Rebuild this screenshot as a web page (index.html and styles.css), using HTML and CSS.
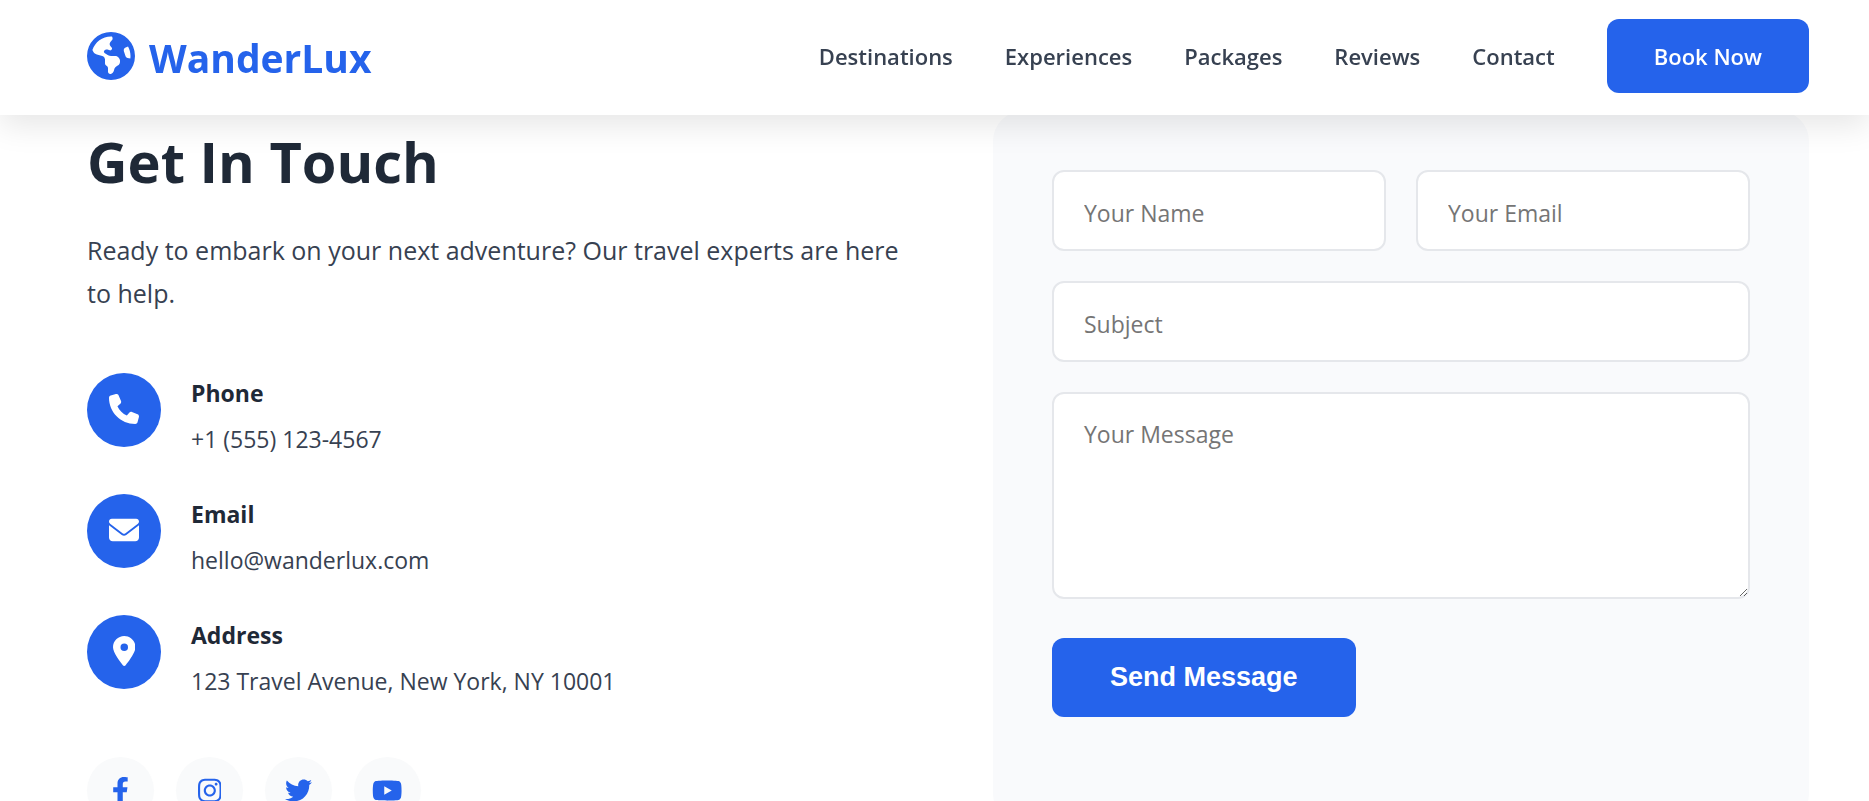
FILE: index.html
```
<!DOCTYPE html>
<html lang="en">
<head>
    <meta charset="UTF-8">
    <meta name="viewport" content="width=device-width, initial-scale=1.0">
    <title>WanderLux - Contact</title>
    <link rel="stylesheet" href="styles.css">
</head>

<body>
    <header class="header">
        <a href="#" class="logo">
            <svg viewBox="0 0 512 512" aria-hidden="true"><path d="M57.7 193l9.4 16.4c8.3 14.5 21.9 25.2 38 29.8L163 255.7c17.2 4.9 29 20.6 29 38.5v39.9c0 11 6.2 21 16 25.9s16 14.9 16 25.9v39c0 15.6 14.9 26.9 29.9 22.6c16.1-4.6 28.6-17.5 32.7-33.8l2.8-11.2c4.2-16.9 15.2-31.4 30.3-40l8.1-4.6c15-8.5 24.2-24.5 24.2-41.7v-8.3c0-12.7-5.1-24.9-14.1-33.9l-3.9-3.9c-9-9-21.2-14.1-33.9-14.1H257c-11.1 0-22.1-2.9-31.8-8.4l-34.5-19.7c-4.3-2.5-7.6-6.5-9.2-11.2c-3.2-9.6 1.1-20 10.2-24.5l5.9-3c6.6-3.3 14.3-3.9 21.3-1.5l23.2 7.7c8.2 2.7 17.2-.4 21.9-7.5c4.7-7 4.2-16.3-1.2-22.8l-13.6-16.3c-10-12-9.9-29.5 .3-41.3l15.7-18.3c8.8-10.3 10.2-25 3.5-36.7l-2.4-4.2c-3.5-.2-6.9-.3-10.4-.3C163.1 48 84.4 108.9 57.7 193zM464 256c0-36.8-9.6-71.4-26.4-101.5L412 164.8c-15.7 6.3-23.8 23.8-18.5 39.8l16.9 50.7c3.5 10.4 12 18.3 22.6 20.9l29.1 7.3c1.2-9 1.8-18.2 1.8-27.5zM0 256a256 256 0 1 1 512 0A256 256 0 1 1 0 256z"/></svg>
            <span>WanderLux</span>
        </a>
        <nav class="nav">
            <a href="#destinations">Destinations</a>
            <a href="#experiences">Experiences</a>
            <a href="#packages">Packages</a>
            <a href="#reviews">Reviews</a>
            <a href="#contact">Contact</a>
            <a href="#book" class="book-btn">Book Now</a>
        </nav>
    </header>

    <main class="contact" id="contact">
        <section class="contact-info">
            <h2>Get In Touch</h2>
            <p class="intro">Ready to embark on your next adventure? Our travel experts are here to help.</p>

            <div class="contact-list">
                <div class="contact-item">
                    <div class="contact-icon">
                        <svg viewBox="0 0 512 512" aria-hidden="true"><path d="M164.9 24.6c-7.7-18.6-28-28.5-47.4-23.2l-88 24C12.1 30.2 0 46 0 64C0 311.4 200.6 512 448 512c18 0 33.8-12.1 38.6-29.5l24-88c5.3-19.4-4.6-39.7-23.2-47.4l-96-40c-16.3-6.8-35.2-2.1-46.3 11.6L304.7 368C234.3 334.7 177.3 277.7 144 207.3L193.3 167c13.7-11.2 18.4-30 11.6-46.3l-40-96z"/></svg>
                    </div>
                    <div>
                        <h4>Phone</h4>
                        <p>+1 (555) 123-4567</p>
                    </div>
                </div>
                <div class="contact-item">
                    <div class="contact-icon">
                        <svg viewBox="0 0 512 512" aria-hidden="true"><path d="M48 64C21.5 64 0 85.5 0 112c0 15.1 7.1 29.3 19.2 38.4L236.8 313.6c11.4 8.5 27 8.5 38.4 0L492.8 150.4c12.1-9.1 19.2-23.3 19.2-38.4c0-26.5-21.5-48-48-48H48zM0 176V384c0 35.3 28.7 64 64 64H448c35.3 0 64-28.7 64-64V176L294.4 339.2c-22.8 17.1-54 17.1-76.8 0L0 176z"/></svg>
                    </div>
                    <div>
                        <h4>Email</h4>
                        <p>hello@wanderlux.com</p>
                    </div>
                </div>
                <div class="contact-item">
                    <div class="contact-icon">
                        <svg viewBox="0 0 384 512" aria-hidden="true"><path d="M215.7 499.2C267 435 384 279.4 384 192C384 86 298 0 192 0S0 86 0 192c0 87.4 117 243 168.3 307.2c12.3 15.3 35.1 15.3 47.4 0zM192 128a64 64 0 1 1 0 128 64 64 0 1 1 0-128z"/></svg>
                    </div>
                    <div>
                        <h4>Address</h4>
                        <p>123 Travel Avenue, New York, NY 10001</p>
                    </div>
                </div>
            </div>

            <div class="social-links">
                <a href="#" aria-label="Facebook"><svg viewBox="0 0 320 512"><path d="M279.14 288l14.22-92.66h-88.91v-60.13c0-25.35 12.42-50.06 52.24-50.06h40.42V6.26S260.43 0 225.36 0c-73.22 0-121.08 44.38-121.08 124.72v70.62H22.89V288h81.39v224h100.17V288z"/></svg></a>
                <a href="#" aria-label="Instagram"><svg viewBox="0 0 448 512"><path d="M224.1 141c-63.6 0-114.9 51.3-114.9 114.9s51.3 114.9 114.9 114.9S339 319.5 339 255.9 287.7 141 224.1 141zm0 189.6c-41.1 0-74.7-33.5-74.7-74.7s33.5-74.7 74.7-74.7 74.7 33.5 74.7 74.7-33.6 74.7-74.7 74.7zm146.4-194.3c0 14.9-12 26.8-26.8 26.8-14.9 0-26.8-12-26.8-26.8s12-26.8 26.8-26.8 26.8 12 26.8 26.8zm76.1 27.2c-1.7-35.9-9.9-67.7-36.2-93.9-26.2-26.2-58-34.4-93.9-36.2-37-2.1-147.9-2.1-184.9 0-35.8 1.7-67.6 9.9-93.9 36.1s-34.4 58-36.2 93.9c-2.1 37-2.1 147.9 0 184.9 1.7 35.9 9.9 67.7 36.2 93.9s58 34.4 93.9 36.2c37 2.1 147.9 2.1 184.9 0 35.9-1.7 67.7-9.9 93.9-36.2 26.2-26.2 34.4-58 36.2-93.9 2.1-37 2.1-147.8 0-184.8zM398.8 388c-7.8 19.6-22.9 34.7-42.6 42.6-29.5 11.7-99.5 9-132.1 9s-102.7 2.6-132.1-9c-19.6-7.8-34.7-22.9-42.6-42.6-11.7-29.5-9-99.5-9-132.1s-2.6-102.7 9-132.1c7.8-19.6 22.9-34.7 42.6-42.6 29.5-11.7 99.5-9 132.1-9s102.7-2.6 132.1 9c19.6 7.8 34.7 22.9 42.6 42.6 11.7 29.5 9 99.5 9 132.1s2.7 102.7-9 132.1z"/></svg></a>
                <a href="#" aria-label="Twitter"><svg viewBox="0 0 512 512"><path d="M459.37 151.716c.325 4.548.325 9.097.325 13.645 0 138.72-105.583 298.558-298.558 298.558-59.452 0-114.68-17.219-161.137-47.106 8.447.974 16.568 1.299 25.34 1.299 49.055 0 94.213-16.568 130.274-44.832-46.132-.975-84.792-31.188-98.112-72.772 6.498.974 12.995 1.624 19.818 1.624 9.421 0 18.843-1.3 27.614-3.573-48.081-9.747-84.143-51.98-84.143-102.985v-1.299c13.969 7.797 30.214 12.67 47.431 13.319-28.264-18.843-46.781-51.005-46.781-87.391 0-19.492 5.197-37.36 14.294-52.954 51.655 63.675 129.3 105.258 216.365 109.807-1.624-7.797-2.599-15.918-2.599-24.04 0-57.828 46.782-104.934 104.934-104.934 30.213 0 57.502 12.67 76.67 33.137 23.715-4.548 46.456-13.32 66.599-25.34-7.798 24.366-24.366 44.833-46.132 57.827 21.117-2.273 41.584-8.122 60.426-16.243-14.292 20.791-32.161 39.308-52.628 54.253z"/></svg></a>
                <a href="#" aria-label="YouTube"><svg viewBox="0 0 576 512"><path d="M549.655 124.083c-6.281-23.65-24.787-42.276-48.284-48.597C458.781 64 288 64 288 64S117.22 64 74.629 75.486c-23.497 6.322-42.003 24.947-48.284 48.597-11.412 42.867-11.412 132.305-11.412 132.305s0 89.438 11.412 132.305c6.281 23.65 24.787 41.5 48.284 47.821C117.22 448 288 448 288 448s170.78 0 213.371-11.486c23.497-6.321 42.003-24.171 48.284-47.821 11.412-42.867 11.412-132.305 11.412-132.305s0-89.438-11.412-132.305zm-317.51 213.508V175.185l142.739 81.205-142.739 81.201z"/></svg></a>
            </div>
        </section>

        <form class="contact-form">
            <div class="form-row">
                <input type="text" placeholder="Your Name" aria-label="Your Name" required>
                <input type="email" placeholder="Your Email" aria-label="Your Email" required>
            </div>
            <input type="text" placeholder="Subject" aria-label="Subject">
            <textarea placeholder="Your Message" aria-label="Your Message" required></textarea>
            <button type="submit" class="submit-btn">Send Message</button>
        </form>
    </main>
</body>
</html>
```

FILE: styles.css
```
* {
    box-sizing: border-box;
    margin: 0;
    padding: 0;
}

body {
    font-family: 'Open Sans', 'Segoe UI', sans-serif;
    color: #1f2937;
    background: #fff;
    padding-top: 111px;
}

a {
    text-decoration: none;
}

svg {
    display: block;
    fill: currentColor;
}

/* Header */
.header {
    position: fixed;
    top: 0;
    left: 0;
    right: 0;
    z-index: 10;
    display: flex;
    justify-content: space-between;
    align-items: center;
    padding: 19px 60px 22px 87px;
    background: #fff;
    box-shadow: 0 10px 30px rgba(0, 0, 0, 0.1);
}

.logo {
    display: flex;
    align-items: center;
    gap: 14px;
    color: #2563eb;
    font-size: 39px;
    font-weight: 700;
    line-height: 56px;
}

.logo svg {
    width: 48px;
    height: 48px;
}

.logo span {
    padding-top: 4px;
}

.nav {
    display: flex;
    align-items: center;
    gap: 52px;
}

.nav a {
    color: #374151;
    font-size: 22px;
    font-weight: 600;
    line-height: 34px;
}

.nav .book-btn {
    padding: 20px 47px;
    border-radius: 12px;
    background: #2563eb;
    color: #fff;
}

/* Contact */
.contact {
    display: grid;
    grid-template-columns: 1fr 1fr;
    gap: 90px;
    padding: 0 60px 0 87px;
}

.contact-info h2 {
    margin-bottom: 18px;
    font-size: 56px;
    font-weight: 700;
    line-height: 100px;
}

.intro {
    margin-bottom: 58px;
    color: #374151;
    font-size: 25px;
    line-height: 43px;
}

.contact-list {
    display: flex;
    flex-direction: column;
    gap: 35px;
}

.contact-item {
    display: flex;
    gap: 30px;
}

.contact-icon {
    display: flex;
    justify-content: center;
    align-items: center;
    flex-shrink: 0;
    width: 74px;
    height: 74px;
    padding-bottom: 2px;
    border-radius: 50%;
    background: #2563eb;
    color: #fff;
}

.contact-icon svg {
    height: 30px;
}

.contact-item h4 {
    margin-bottom: 6px;
    font-size: 23px;
    font-weight: 700;
    line-height: 40px;
}

.contact-item p {
    color: #374151;
    font-size: 23px;
    line-height: 40px;
}

.social-links {
    display: flex;
    gap: 22px;
    margin-top: 56px;
}

.social-links a {
    display: flex;
    justify-content: center;
    align-items: center;
    width: 67px;
    height: 67px;
    border-radius: 50%;
    background: #f9fafb;
    color: #2563eb;
}

.social-links svg {
    height: 27px;
}

/* Form */
.contact-form {
    padding: 59px;
    border-radius: 30px;
    background: #f9fafc;
}

.form-row {
    display: grid;
    grid-template-columns: 1fr 1fr;
    gap: 30px;
}

.contact-form input,
.contact-form textarea {
    display: block;
    width: 100%;
    margin-bottom: 30px;
    padding: 24px 30px 20px;
    border: 2px solid #e5e7eb;
    border-radius: 12px;
    background: #fff;
    font-family: inherit;
    font-size: 23px;
    line-height: 32px;
}

.contact-form input {
    height: 81px;
}

.contact-form textarea {
    height: 207px;
    margin-bottom: 39px;
    resize: vertical;
}

.submit-btn {
    padding: 24px 58px;
    border: none;
    border-radius: 12px;
    background: #2563eb;
    color: #fff;
    font-family: 'Liberation Sans', Arial, sans-serif;
    font-size: 27px;
    font-weight: 700;
    line-height: 31px;
    cursor: pointer;
}
```
